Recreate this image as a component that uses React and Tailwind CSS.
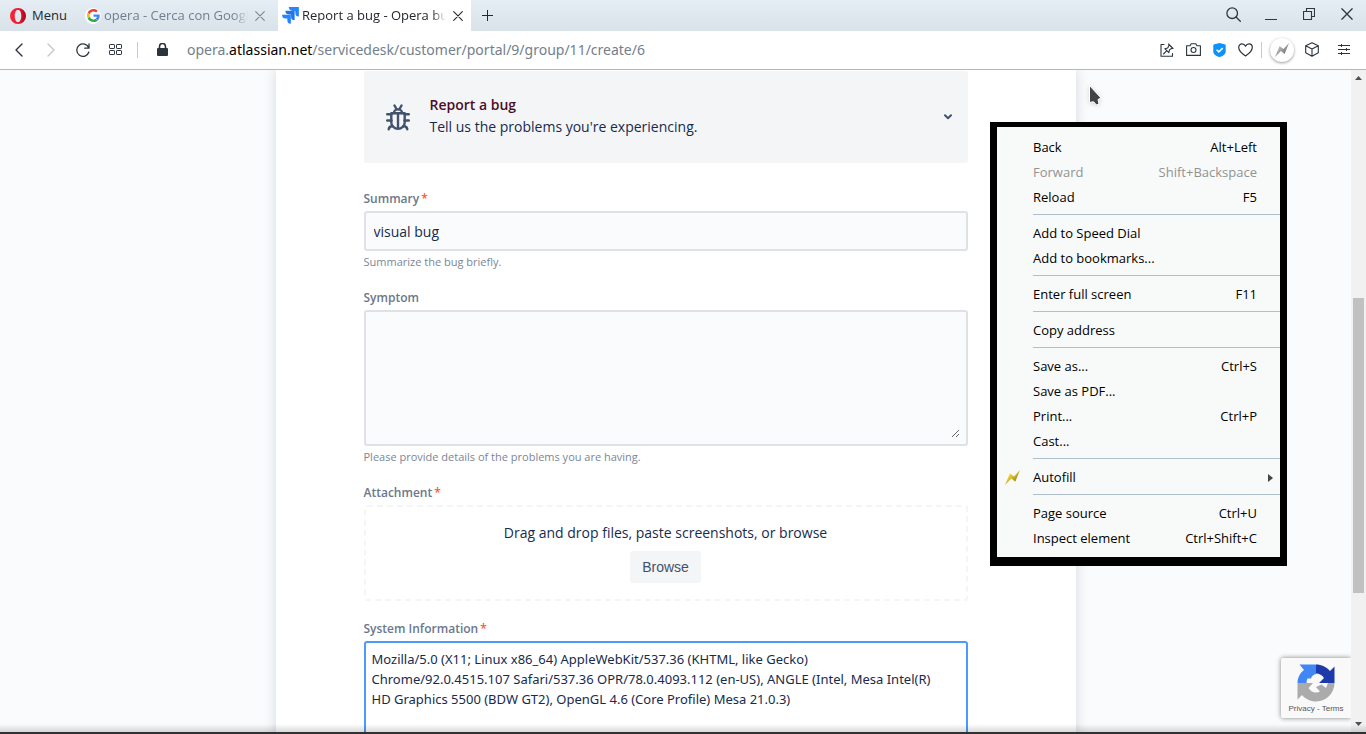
import React, { useState } from 'react';

const strokeProps = {
  fill: 'none',
  stroke: 'currentColor',
  strokeLinecap: 'round',
  strokeLinejoin: 'round',
};

const OperaLogo = () => (
  <svg width="16" height="16" viewBox="0 0 16 16">
    <defs>
      <linearGradient id="operaRed" x1="0" y1="0" x2="1" y2="0">
        <stop offset="0" stopColor="#ff2638" />
        <stop offset="0.6" stopColor="#e8152b" />
        <stop offset="1" stopColor="#a3061a" />
      </linearGradient>
    </defs>
    <path
      fill="url(#operaRed)"
      fillRule="evenodd"
      d="M8 0a8 8 0 1 0 0 16A8 8 0 1 0 8 0zM8 1.8c2 0 3.3 2.8 3.3 6.2S10 14.2 8 14.2 4.7 11.400 4.700 8 6 1.800 8 1.800z"
    />
  </svg>
);

const GoogleLogo = () => (
  <span className="flex h-4 w-4 shrink-0 items-center justify-center rounded-full bg-white">
    <svg width="13" height="13" viewBox="0 0 48 48">
      <path fill="#EA4335" d="M24 9.500c3.540 0 6.710 1.220 9.210 3.600l6.850-6.850C35.900 2.380 30.470 0 24 0 14.620 0 6.510 5.380 2.560 13.220l7.980 6.190C12.430 13.720 17.740 9.500 24 9.500z" />
      <path fill="#4285F4" d="M46.980 24.550c0-1.570-.15-3.090-.38-4.550H24v9.020h12.940c-.58 2.960-2.260 5.480-4.780 7.180l7.730 6c4.510-4.180 7.090-10.360 7.090-17.650z" />
      <path fill="#FBBC05" d="M10.530 28.590c-.48-1.450-.76-2.990-.76-4.590s.27-3.140.76-4.590l-7.980-6.190C.92 16.460 0 20.120 0 24s.92 7.540 2.560 10.780l7.970-6.190z" />
      <path fill="#34A853" d="M24 48c6.480 0 11.930-2.130 15.890-5.810l-7.730-6c-2.150 1.450-4.920 2.300-8.160 2.300-6.260 0-11.570-4.220-13.470-9.910l-7.980 6.190C6.510 42.620 14.620 48 24 48z" />
    </svg>
  </span>
);

const JiraLogo = () => (
  <svg className="shrink-0" width="17" height="17" viewBox="0 0 24 24">
    <path fill="#2684ff" d="M9.500 0h14.300v13.500a5 5 0 0 1-5-5V5.500h-3.500A5.500 5.500 0 0 1 9.500 0z" />
    <path fill="#1f74ef" d="M4.800 5.200h13v13.500a5 5 0 0 1-5-5v-3H10a5.500 5.500 0 0 1-5.200-5.500z" />
    <path fill="#2684ff" d="M0 10.800h12.500v13a5 5 0 0 1-5-5v-2.600H5A5.400 5.400 0 0 1 0 10.800z" />
  </svg>
);

const CloseIcon = ({ size = 10 }) => (
  <svg width={size} height={size} viewBox="0 0 10 10" {...strokeProps} strokeWidth="1.100">
    <path d="M.7.7l8.600 8.600M9.300.7L.7 9.300" />
  </svg>
);

const BugIcon = () => (
  <svg width="24" height="27" viewBox="0 0 24 27" fill="none" stroke="#42526e" strokeWidth="2.400" strokeLinecap="round" strokeLinejoin="round">
    <path d="M5.300 9.200h13.400v9.300a6.700 6.300 0 0 1-13.400 0z" />
    <path d="M8 9a4 3.600 0 0 1 8 0M12 10v14M8.500 1.500l1.700 3M15.500 1.500l-1.700 3" />
    <path d="M1.200 10.200h4.300M1.200 16.500h4.300M18.500 10.200h4.300M18.500 16.500h4.300M2.700 25.200c.3-2 1.600-3 3.700-3.200M21.300 25.200c-.3-2-1.600-3-3.700-3.200" />
  </svg>
);

const Bolt = ({ id, from, to, size = 14 }) => (
  <svg width={size} height={size} viewBox="0 0 14 14">
    <defs>
      <linearGradient id={id} x1="0" y1="0" x2="1" y2="1">
        <stop offset="0.300" stopColor={from} />
        <stop offset="0.700" stopColor={to} />
      </linearGradient>
    </defs>
    <path fill={`url(#${id})`} d="M0 14L4.600 3l3.800 3.100L14 0 9.600 11 6 7.900z" />
  </svg>
);

const RecaptchaLogo = () => (
  <svg width="38" height="38" viewBox="0 0 38 38">
    <path fill="#1c3aa9" d="M19 .5c5.500 0 10.500 2.500 14 6.500l4.500-4.500V19H22l5-5c-1.800-3-4.500-4.500-8-4.500z" />
    <path fill="#4285f4" d="M19 .5V10c-2 .5-4.500 2-5 4.500h-3.500c-.8 1.500-1 3-1 4.500H.5C.5 14 3 9 7 6L2.500.5z" />
    <path fill="#ababab" d="M.5 19H16l-4.500 5c2 3.200 4.500 4.500 7.500 4.500 1.500 0 3-.5 4-1l-4-4.500 5.500-2.500L29 24l2-5h6.500c0 10-8 18.500-18.500 18.500-5.500 0-10.500-2.500-14-6.500L.5 35.500z" />
  </svg>
);

const menuGroups = [
  [
    { label: 'Back', keys: 'Alt+Left' },
    { label: 'Forward', keys: 'Shift+Backspace', disabled: true },
    { label: 'Reload', keys: 'F5' },
  ],
  [{ label: 'Add to Speed Dial' }, { label: 'Add to bookmarks...' }],
  [{ label: 'Enter full screen', keys: 'F11' }],
  [{ label: 'Copy address' }],
  [
    { label: 'Save as...', keys: 'Ctrl+S' },
    { label: 'Save as PDF...' },
    { label: 'Print...', keys: 'Ctrl+P' },
    { label: 'Cast...' },
  ],
  [{ label: 'Autofill', bolt: true, submenu: true }],
  [
    { label: 'Page source', keys: 'Ctrl+U' },
    { label: 'Inspect element', keys: 'Ctrl+Shift+C' },
  ],
];

const ContextMenu = () => (
  <div
    role="menu"
    className="absolute left-[990px] top-[122px] z-20 w-[297px] border-x-[7px] border-t-[5px] border-b-[9px] border-black bg-[#f8faf9] pt-2 pb-1.5 text-[13px] text-black"
  >
    {menuGroups.map((group, i) => (
      <div key={i}>
        {i > 0 && <div className="mt-1 mb-1.5 ml-9 h-px bg-[#afbfcb]" />}
        {group.map((item) => (
          <button
            key={item.label}
            role="menuitem"
            type="button"
            disabled={item.disabled}
            className={`flex h-[25px] w-full items-center ${item.disabled ? 'text-[#919393]' : ''}`}
          >
            <span className="flex w-9 justify-start pl-2">
              {item.bolt && <Bolt id="boltGold" from="#f6d933" to="#a98c28" size={15} />}
            </span>
            <span>{item.label}</span>
            {item.keys && <span className="ml-auto pr-[23px]">{item.keys}</span>}
            {item.submenu && (
              <svg className="mr-[7px] ml-auto" width="5" height="8" viewBox="0 0 5 8">
                <path fill="#444" d="M0 0l5 4-5 4z" />
              </svg>
            )}
          </button>
        ))}
      </div>
    ))}
  </div>
);

const TabBar = () => (
  <header className="flex h-[31px] shrink-0 bg-linear-to-b from-[#e5edf5] to-[#d9e1e9] text-[13px]">
    <button type="button" className="flex w-[77px] items-center gap-1.5 pl-2.5 text-[#23272e]">
      <OperaLogo />
      <span>Menu</span>
    </button>
    <div className="flex w-[201px] items-center pl-2">
      <GoogleLogo />
      <span className="ml-[3px] w-[144px] mask-r-from-90% whitespace-nowrap text-[#6f7f90]">
        opera - Cerca con Googl
      </span>
      <button type="button" aria-label="Close tab" className="ml-0.5 flex h-5 w-5 items-center justify-center text-[#7b8590]">
        <CloseIcon />
      </button>
    </div>
    <div className="flex w-[193px] items-center bg-white pl-1">
      <JiraLogo />
      <span className="ml-[3px] w-[144px] mask-r-from-90% whitespace-nowrap text-[#23272e]">
        Report a bug - Opera bu
      </span>
      <button type="button" aria-label="Close tab" className="ml-0.5 flex h-5 w-5 items-center justify-center text-[#23272e]">
        <CloseIcon />
      </button>
    </div>
    <button type="button" aria-label="New tab" className="flex w-8 items-center justify-center text-[#23272e]">
      <svg width="11" height="11" viewBox="0 0 11 11" stroke="currentColor">
        <path d="M5.500 0v11M0 5.500h11" />
      </svg>
    </button>
    <div className="ml-auto flex items-center gap-1.5 pr-[3px] pb-[3px] text-[#2f3742]">
      <button type="button" aria-label="Search" className="flex w-8 justify-center">
        <svg width="15" height="15" viewBox="0 0 15 15" {...strokeProps} strokeWidth="1.300">
          <circle cx="6.200" cy="6.200" r="5.300" />
          <path d="M10 10l4.300 4.300" />
        </svg>
      </button>
      <button type="button" aria-label="Minimize" className="flex w-8 justify-center">
        <svg width="12" height="12" viewBox="0 0 12 12" stroke="currentColor" strokeWidth="1">
          <path d="M0 11.500h12" />
        </svg>
      </button>
      <button type="button" aria-label="Restore" className="flex w-8 justify-center">
        <svg width="12" height="12" viewBox="0 0 12 12" fill="none" stroke="currentColor" strokeWidth="1.100">
          <path d="M.5 3.500h8v8h-8zM3.500 3.500v-3h8v8h-3" />
        </svg>
      </button>
      <button type="button" aria-label="Close window" className="flex w-8 justify-center">
        <CloseIcon size={12} />
      </button>
    </div>
  </header>
);

const AddressBar = () => (
  <nav className="flex h-[39px] shrink-0 items-center border-b border-[#aeb8c2] bg-white pb-px text-[#2b343d]">
    <div className="flex items-center pl-[3px]">
      <button type="button" aria-label="Back" className="flex w-8 justify-center">
        <svg width="8" height="14" viewBox="0 0 8 14" {...strokeProps} strokeWidth="1.400">
          <path d="M7 1L1 7l6 6" />
        </svg>
      </button>
      <button type="button" aria-label="Forward" className="flex w-8 justify-center text-[#c3c7cb]">
        <svg width="8" height="14" viewBox="0 0 8 14" {...strokeProps} strokeWidth="1.400">
          <path d="M1 1l6 6-6 6" />
        </svg>
      </button>
      <button type="button" aria-label="Reload" className="flex w-8 justify-center">
        <svg width="14" height="14" viewBox="0 0 14 14" {...strokeProps} strokeWidth="1.300">
          <path d="M12.800 5A6.200 6.200 0 1 0 12.900 9M13 .8V5.200H8.700" />
        </svg>
      </button>
      <button type="button" aria-label="Speed Dial" className="flex w-8 justify-center">
        <svg width="13" height="11" viewBox="0 0 13 11" fill="none" stroke="currentColor">
          <rect x=".5" y=".5" width="5" height="4" rx=".6" />
          <rect x="7.500" y=".5" width="5" height="4" rx=".6" />
          <rect x=".5" y="6.500" width="5" height="4" rx=".6" />
          <rect x="7.500" y="6.500" width="5" height="4" rx=".6" />
        </svg>
      </button>
      <span className="ml-1.5 h-4 w-px bg-[#c5c9cd]" />
      <svg className="ml-[19px]" width="11" height="13" viewBox="0 0 11 13">
        <rect y="5" width="11" height="8" rx="1" fill="currentColor" />
        <path d="M2.500 6V3.500a3 3 0 0 1 6 0V6" fill="none" stroke="currentColor" strokeWidth="1.600" />
      </svg>
    </div>
    <p className="ml-[19px] flex-1 overflow-hidden font-['Noto_Sans',sans-serif] text-[14px] whitespace-nowrap text-[#73808c]">
      opera.<span className="text-black">atlassian.net</span>/servicedesk/customer/portal/9/group/11/create/6
    </p>
    <div className="flex items-center pr-[9px]">
      <button type="button" aria-label="Share" className="flex w-[26px] justify-center">
        <svg width="14" height="14" viewBox="0 0 14 14" {...strokeProps} strokeWidth="1.100">
          <path d="M4 1.500H1v11.800h11.500V10.500M8.500 1L13 5.500M9.300 1.800L7.700 5 4.800 5.700l4 4 .8-3L12.500 5M6.600 7.800L3.500 11" />
        </svg>
      </button>
      <button type="button" aria-label="Snapshot" className="flex w-[26px] justify-center">
        <svg width="15" height="13" viewBox="0 0 15 13" {...strokeProps} strokeWidth="1.100">
          <path d="M.6 2.700h3.500L5.200.7h4.600l1.100 2h3.500v9.700H.6z" />
          <circle cx="7.500" cy="7" r="2.500" />
        </svg>
      </button>
      <button type="button" aria-label="Ad blocker" className="flex w-[26px] justify-center">
        <svg width="13" height="14" viewBox="0 0 13 14">
          <path fill="#0b93fb" d="M6.500 0l5.700 1.400q.5.100.5.600v6.500c0 2.800-3 4.800-6.200 5.500C3.300 13.300.3 11.300.3 8.500V2q0-.5.500-.6z" />
          <path d="M3.600 6.700l2.200 2.200 3.900-3.800" fill="none" stroke="#fff" strokeWidth="1.500" />
        </svg>
      </button>
      <button type="button" aria-label="Bookmark" className="flex w-[26px] justify-center">
        <svg width="15" height="14" viewBox="0 0 15 14" {...strokeProps} strokeWidth="1.200">
          <path d="M7.500 13C3.500 10.300.7 7.600.7 4.500.7 2.300 2.200.9 4 .9c1.600 0 2.800.9 3.500 2.200C8.200 1.800 9.400.9 11 .9c1.800 0 3.300 1.400 3.300 3.600 0 3.100-2.800 5.800-6.800 8.500z" />
        </svg>
      </button>
      <span className="ml-[3px] h-4 w-px bg-[#c5c9cd]" />
      <button
        type="button"
        aria-label="Autofill"
        className="ml-2 flex h-6 w-6 items-center justify-center rounded-full bg-white shadow-[0_1px_3px_rgba(0,0,0,0.4)]"
      >
        <Bolt id="boltGray" from="#b9b9b9" to="#7d7d7d" />
      </button>
      <button type="button" aria-label="Extensions" className="ml-[5px] flex w-[26px] justify-center">
        <svg width="14" height="15" viewBox="0 0 14 15" {...strokeProps} strokeWidth="1.100">
          <path d="M7 .8l6.300 3v7L7 14.200.7 10.800v-7zM.7 3.800L7 7l6.300-3.200M7 7v7.200" />
        </svg>
      </button>
      <button type="button" aria-label="Easy setup" className="ml-1.5 flex w-[26px] justify-center">
        <svg width="12" height="11" viewBox="0 0 12 11" stroke="currentColor">
          <path d="M0 1.500h12M0 5.500h12M0 9.500h12M3.500 0v3M8.500 4v3M3.500 8v3" />
        </svg>
      </button>
    </div>
  </nav>
);

const Field = ({ id, label, required, hint, children }) => (
  <div className="mb-[18px]">
    <label htmlFor={id} className="mb-0.5 block h-5 text-[12px] leading-5 font-semibold text-[#6b778c]">
      {label}
      {required && <span className="ml-0.5 text-[#ff5630]">*</span>}
    </label>
    {children}
    {hint && <p className="mt-[3px] h-4 text-[11px] leading-4 text-[#7a869a]">{hint}</p>}
  </div>
);

const userAgent = `Mozilla/5.0 (X11; Linux x86_64) AppleWebKit/537.36 (KHTML, like Gecko)
Chrome/92.0.4515.107 Safari/537.36 OPR/78.0.4093.112 (en-US), ANGLE (Intel, Mesa Intel(R)
HD Graphics 5500 (BDW GT2), OpenGL 4.6 (Core Profile) Mesa 21.0.3)`;

const BugForm = () => {
  const [summary, setSummary] = useState('visual bug');
  const [system, setSystem] = useState(userAgent);

  return (
    <main className="mx-auto min-h-full w-full max-w-[800px] bg-white pt-px pr-[108px] pl-[88px] text-[14px] text-[#172b4d] shadow-[0_0_12px_rgba(9,30,66,0.16)]">
      <button type="button" className="mb-[26px] flex h-[92px] w-full items-center rounded-[3px] bg-[#f4f5f7] pr-4 pl-[22px] text-left">
        <BugIcon />
        <span className="ml-5 flex flex-col pb-0.5 leading-[22px]">
          <span className="font-semibold text-[#4c0d28]">Report a bug</span>
          <span>Tell us the problems you're experiencing.</span>
        </span>
        <svg className="ml-auto" width="8" height="6" viewBox="0 0 8 6" {...strokeProps} stroke="#42526e" strokeWidth="2">
          <path d="M1 1.300l3 3 3-3" />
        </svg>
      </button>

      <Field id="summary" label="Summary" required hint="Summarize the bug briefly.">
        <input
          id="summary"
          type="text"
          value={summary}
          onChange={(e) => setSummary(e.target.value)}
          className="block h-10 w-full rounded-[3px] border-2 border-[#dfe1e6] bg-[#fafbfc] px-2 text-[14px] outline-none"
        />
      </Field>

      <Field id="symptom" label="Symptom" hint="Please provide details of the problems you are having.">
        <div className="rounded-[3px] border-2 border-[#dfe1e6] bg-[#fafbfc] p-1.5">
          <textarea id="symptom" className="block h-[120px] w-full resize bg-transparent outline-none" />
        </div>
      </Field>

      <Field id="browse" label="Attachment" required>
        <div className="flex h-24 flex-col items-center rounded-[3px] border-2 border-dashed border-[#f4f5f7] pt-4">
          <p className="leading-5">Drag and drop files, paste screenshots, or browse</p>
          <button
            id="browse"
            type="button"
            className="mt-2 h-8 rounded-[3px] bg-[#f4f5f7] px-3 font-['Liberation_Sans',sans-serif] text-[14px] text-[#42526e]"
          >
            Browse
          </button>
        </div>
      </Field>

      <Field id="system" label="System Information" required>
        <textarea
          id="system"
          value={system}
          onChange={(e) => setSystem(e.target.value)}
          className="block h-[140px] w-full resize-none overflow-hidden rounded-[3px] border-2 border-[#4c9aff] bg-white px-1.5 py-1.5 font-['Noto_Sans',sans-serif] text-[13px] leading-5 outline-none"
        />
      </Field>
    </main>
  );
};

const ScrollBar = () => (
  <div className="flex w-[15px] shrink-0 flex-col items-center bg-[#f1f1f1]">
    <svg className="mt-1.5" width="7" height="4" viewBox="0 0 7 4">
      <path fill="#505050" d="M0 4l3.500-4L7 4z" />
    </svg>
    <div className="mt-[218px] h-[295px] w-[11px] bg-[#c1c1c1]" />
    <svg className="mt-auto mb-1.5" width="7" height="4" viewBox="0 0 7 4">
      <path fill="#505050" d="M0 0l3.500 4L7 0z" />
    </svg>
  </div>
);

const App = () => (
  <div className="relative flex h-screen w-full flex-col overflow-hidden bg-[#fafbfc] font-['Open_Sans','Noto_Sans',sans-serif]">
    <TabBar />
    <AddressBar />

    <div className="relative flex min-h-0 flex-1">
      <div className="min-w-0 flex-1 overflow-hidden">
        <BugForm />
      </div>
      <ScrollBar />

      {/* reCAPTCHA badge, floats over the page next to the scrollbar */}
      <div className="absolute right-[15px] bottom-3.5 flex h-[60px] w-[70px] flex-col items-center rounded-l-[2px] bg-[#f9f9f9] pt-1.5 shadow-[0_0_5px_gray] [clip-path:inset(-8px_0_-8px_-8px)]">
        <RecaptchaLogo />
        <p className="mt-px font-['Liberation_Sans',sans-serif] text-[8px] leading-3 text-[#555]">
          <a href="#privacy">Privacy</a> - <a href="#terms">Terms</a>
        </p>
      </div>
      <div className="pointer-events-none absolute inset-x-0 bottom-0 h-2 bg-linear-to-b from-transparent to-black/15" />
    </div>
    <div className="h-0.5 shrink-0 bg-[#2f3133]" />

    <ContextMenu />

    {/* Mouse pointer */}
    <svg className="absolute left-[1088px] top-[84px] z-30 drop-shadow-sm" width="15" height="22" viewBox="0 0 15 22">
      <path fill="#444" stroke="#fff" strokeWidth="1" d="M1.500 1.500v17l4-.8 3 3.300 2.500-1.200-1-4.300 3-1.500z" />
    </svg>
  </div>
);

export default App;
